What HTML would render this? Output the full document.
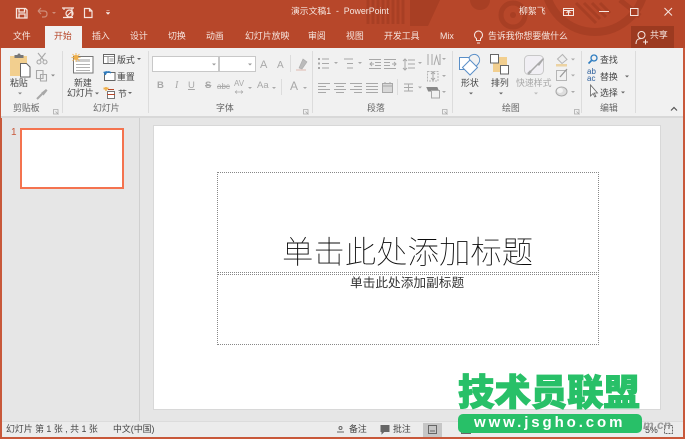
<!DOCTYPE html>
<html lang="zh"><head><meta charset="utf-8"><style>
*{box-sizing:border-box}
html,body{margin:0;padding:0}
body{width:685px;height:439px;position:relative;overflow:hidden;background:#e6e6e6;font-family:"Liberation Sans","Noto Sans CJK SC",sans-serif;color:#444}
.a,.t{position:absolute;white-space:nowrap}
.t{font-size:8.900px;line-height:12px;filter:blur(.25px)}
.w{color:#f6e6e0}
.g{color:#a8a8a8}
.l{color:#666}
.s{position:absolute;top:51px;height:62px;width:1px;background:#dcdcdc}
svg{position:absolute;left:0;top:0;filter:blur(.3px)}
</style></head><body>
<div class="a" style="left:0;top:0;width:685px;height:48px;background:#b7472a"></div>
<svg width="685" height="48" fill="none">
<g stroke="#a83f24" stroke-width="3"><path d="M368 0v24M373 0v24M378 0v24M383 0v24M388 0v24M393 0v24M398 0v24M403 0v24"/></g>
<path d="M410 0h30l-12 26h-18z" fill="#a83f24"/>
<circle cx="480" cy="0" r="10" fill="#a83f24"/>
<g stroke="#a83f24"><circle cx="513" cy="15" r="12" stroke-width="5"/><circle cx="595" cy="-18" r="50" stroke-width="8"/>
<path d="M576 3l20 20M584 3l16 16M592 3l14 14M600 3l10 10" stroke-width="3"/><path d="M620 0l20 16" stroke-width="5"/></g>
<circle cx="513" cy="15" r="3" fill="#a83f24"/>
<g stroke="#f6e6e0" stroke-width="1.200">
<path d="M16.500 8.500h9l1.500 1.500v8h-10.500zM19 8.500v3.500h5.500v-3.500M19 18v-4h6v4" stroke-width="1.300"/>
<path d="M38 11l3-3M38 11l3 3M38 11h6q3 0 3 3t-3 3h-2" stroke="#cf8d79"/>
<path d="M62 8h12M64 8v2M72 8v7M66 13.500a3.500 3.500 0 1 1 7 0a3.500 3.500 0 1 1-7 0M63 17.500h10M67 16l5-5"/>
<path d="M84.500 8.500h5l2.500 2.500v6.500h-7.500zM89.500 8.500v2.500h2.500"/>
</g>
<path d="M52 12l2 2 2-2z" fill="#cf8d79"/>
<path d="M106.500 10.500h3M106 12.500h4l-2 2z" fill="#f6e6e0" stroke="#f6e6e0" stroke-width=".5"/>
<g stroke="#f6e6e0" stroke-width="1"><rect x="563.500" y="8.500" width="10" height="7"/><path d="M563 10.500h11M568.500 11v4M566.500 13l2-2 2 2"/><path d="M599 11.500h10"/><rect x="630.500" y="8.500" width="7.500" height="7"/><path d="M664.500 8l7.500 7.500M672 8l-7.500 7.500"/></g>
</svg>
<div class="t w" style="left:291px;top:5px;font-size:8.800px">演示文稿1&nbsp; -&nbsp; PowerPoint</div>
<div class="t w" style="left:519px;top:5px">柳絮飞</div>
<div class="a" style="left:45px;top:26px;width:37px;height:22px;background:#f1f1f1"></div>
<div class="a" style="left:631px;top:26px;width:43px;height:22px;background:#9c3a20"></div>
<div class="t w" style="left:13px;top:30px">文件</div>
<div class="t" style="left:54px;top:30px;color:#b7472a">开始</div>
<div class="t w" style="left:92px;top:30px">插入</div>
<div class="t w" style="left:130px;top:30px">设计</div>
<div class="t w" style="left:168px;top:30px">切换</div>
<div class="t w" style="left:206px;top:30px">动画</div>
<div class="t w" style="left:245px;top:30px">幻灯片放映</div>
<div class="t w" style="left:308px;top:30px">审阅</div>
<div class="t w" style="left:346px;top:30px">视图</div>
<div class="t w" style="left:384px;top:30px">开发工具</div>
<div class="t w" style="left:440px;top:30px">Mix</div>
<div class="t w" style="left:488px;top:30px">告诉我你想要做什么</div>
<div class="t w" style="left:650px;top:29px">共享</div>
<svg width="685" height="48" fill="none" stroke="#f6e6e0"><path d="M476.500 38.500a4 4 0 1 1 4 0v2h-4zM477 43h3"/><circle cx="641.500" cy="35" r="3.500"/><path d="M636 44c0-5 3-5.500 5.500-5.500M643 42h5M645.500 39.500v5"/></svg>

<div class="a" style="left:1px;top:48px;width:683px;height:68px;background:#f1f1f1"></div>
<div class="a" style="left:0;top:116px;width:685px;height:2px;background:#d8d8d8"></div>
<div class="s" style="left:62px"></div><div class="s" style="left:148px"></div><div class="s" style="left:312px"></div><div class="s" style="left:452px"></div><div class="s" style="left:581px"></div><div class="s" style="left:635px"></div>

<svg width="685" height="118" fill="none">
<!-- clipboard -->
<rect x="10" y="56" width="17" height="20" fill="#f2cf8f"/><path d="M14.500 58v-3h3a1.500 1.500 0 0 1 3 0h3v3z" fill="#777"/>
<path d="M20.500 63.500h6l3.500 3.500v10h-9.500z" fill="#fff" stroke="#666"/>
<g stroke="#a8a8a8" stroke-width="1.100"><circle cx="39" cy="62" r="2"/><circle cx="45" cy="62" r="2"/><path d="M38 53l6 7.500M45.500 53l-6 7.500"/><path d="M36.500 70.500h6.500v8h-6.500zM40.500 74.500h6v6.500h-6z"/></g>
<path d="M37 99l5-5" stroke="#a8a8a8" stroke-width="2"/><path d="M41 93l5-4 1.500 1.500-4 5z" fill="#a8a8a8"/>
<path d="M18 92.500l2 2 2-2zM51 74.500l2 2 2-2z" fill="#888"/>
<!-- new slide -->
<rect x="73.500" y="56.500" width="19.500" height="16.500" fill="#fff" stroke="#777"/><rect x="76" y="59" width="14" height="3" fill="#ccc"/><path d="M76 64.500h14M76 67.500h14M76 70.500h14" stroke="#999" stroke-width=".7"/>
<circle cx="76" cy="57.500" r="2.500" fill="#f0b04a"/><path d="M71.500 57.500h9M76 53v9M72.500 54l7 7M79.500 54l-7 7" stroke="#f0b04a" stroke-width=".8"/>
<rect x="103.500" y="54.500" width="11" height="9" fill="#fff" stroke="#666"/><path d="M104 56.500h10M108 57v6M109.500 59h4M109.500 61h4" stroke="#777" stroke-width=".8"/>
<rect x="104.500" y="72.500" width="10.500" height="8" fill="#fff" stroke="#666"/><path d="M105 75a3.500 3.500 0 0 1 6-2" stroke="#2d7cc0" stroke-width="1.500"/><path d="M103 72l3 3 1-4z" fill="#2d7cc0"/>
<path d="M103.500 88.500h5" stroke="#f0b04a" stroke-width="2"/><path d="M106 87v4" stroke="#f0b04a" stroke-width="1.500"/><path d="M108 89.500h6" stroke="#b7472a"/>
<rect x="107.500" y="91.500" width="7" height="7" fill="#fff" stroke="#777"/><path d="M107 94.500h8" stroke="#b7472a"/>
<path d="M137 58l2 2 2-2zM95 92.500l2 2 2-2zM128 92l2 2 2-2z" fill="#666"/>
<!-- font -->
<rect x="152.500" y="56.500" width="66" height="15" fill="#fff" stroke="#c8c8c8"/><rect x="219.500" y="56.500" width="36" height="15" fill="#fff" stroke="#c8c8c8"/>
<path d="M212 63.500l2 2 2-2zM248 63.500l2 2 2-2z" fill="#999"/>
<path d="M290.500 55v17M281.500 79v16" stroke="#dcdcdc"/>
<path d="M299 68l4-9 4 3-5 7z" fill="#bbb" stroke="#aaa" stroke-width=".6"/><path d="M296 70h10" stroke="#e0b9b0"/>
<path d="M248 87l2 2 2-2zM272 87l2 2 2-2zM303 87l2 2 2-2z" fill="#aaa"/>
<path d="M235 92h8M235 92l2-1.500M235 92l2 1.500M243 92l-2-1.500M243 92l-2 1.500" stroke="#a8a8a8" stroke-width=".7"/>
<!-- paragraph -->
<g stroke="#a8a8a8">
<path d="M322 59h7M322 63.500h7M322 68h7M344 59h9M347 63.500h6M347 68h6"/>
<path d="M318 58v2h2v-2zM318 62.500v2h2v-2zM318 67v2h2v-2z" fill="#a8a8a8" stroke="none"/>
<path d="M369 59.500h12M369 68.500h12M375 62.500h6M375 65.500h6M374 64h-4M372 62l-2 2 2 2"/>
<path d="M384 59.500h12M384 68.500h12M384 62.500h6M384 65.500h6M392 64h4M394 62l2 2-2 2"/>
<path d="M408 60h7M408 64h7M408 68h7M405 59v11M403 61l2-2 2 2M403 68l2 2 2-2"/>
<path d="M428 54v11M432 54v11M440 54v11M434 65l2.500-9 2.500 9" stroke-width="1"/>
<rect x="427.500" y="71.500" width="10.500" height="9.500" stroke="#b5b5b5" stroke-dasharray="2 1"/><path d="M433 72v8M431 74l2-2 2 2M431 78l2 2 2-2"/>
<path d="M427 87.500h10l1.500 3.500h-10z" fill="#888" stroke="#888"/><rect x="431.500" y="90.500" width="8" height="7.500" fill="#f1f1f1"/>
<path d="M318 83.500h12M318 86.500h8M318 89.500h12M318 92.500h8"/>
<path d="M334 83.500h12M336 86.500h8M334 89.500h12M336 92.500h8"/>
<path d="M350 83.500h12M354 86.500h8M350 89.500h12M354 92.500h8"/>
<path d="M366 83.500h12M366 86.500h12M366 89.500h12M366 92.500h12"/>
<rect x="382.500" y="83.500" width="10" height="9" fill="#d8d8d8"/><path d="M382 86h11M385 82v2M390 82v2"/>
<path d="M404 84h9M404 87.500h9M404 91h9M408.500 84v7" stroke-width=".9"/>
<path d="M397.500 79v16" stroke="#dcdcdc"/>
</g>
<path d="M334 62l2 2 2-2zM358 62l2 2 2-2zM418 62l2 2 2-2zM442 58l2 2 2-2zM442 75l2 2 2-2zM442 91l2 2 2-2zM418 86.500l2 2 2-2z" fill="#aaa"/>
<!-- shapes -->
<path d="M459.500 57.500h12.500v12h-12.500z" fill="#fff" stroke="#5a8fc8"/>
<path d="M469 58a5.500 5.500 0 0 1 9.500-1.500a6 6 0 0 1 0 7l-5 6z" fill="#f1f1f1" stroke="#5a8fc8"/>
<path d="M470 60l7.500 7.500-7.500 7.500-7.500-7.500z" fill="#fff" stroke="#5a8fc8"/>
<rect x="493" y="57" width="14" height="15" fill="#f2cf8f"/>
<rect x="490.500" y="54.500" width="8" height="8.500" fill="#fff" stroke="#666"/>
<rect x="500.500" y="65.500" width="8" height="8.500" fill="#fff" stroke="#666"/>
<rect x="524.500" y="55.500" width="19" height="19" rx="4" fill="#f1eff4" stroke="#c8c8c8"/>
<path d="M531 71l7-7" stroke="#a8a8a8" stroke-width="1.500"/><path d="M537 64l6-6 1 1-5 7z" fill="#a8a8a8"/>
<path d="M528 74l3-3" stroke="#a8a8a8" stroke-width="2.500"/>
<path d="M557.500 59l5-4.500 4.500 5-5 4z" fill="#eee" stroke="#b5b5b5"/><rect x="556" y="64" width="11" height="2.500" fill="#ecd3a3"/>
<rect x="556.500" y="70.500" width="10" height="10" fill="#f1f1f1" stroke="#b5b5b5"/><path d="M560 77l7-8" stroke="#999" stroke-width="1.300"/>
<ellipse cx="561.500" cy="91.500" rx="5.500" ry="4.500" fill="#ddd" stroke="#a8a8a8"/><ellipse cx="560" cy="90.500" rx="3" ry="2.500" fill="#f4f4f4"/>
<path d="M571 58.500l2 2 2-2zM571 74.500l2 2 2-2zM571 91l2 2 2-2z" fill="#aaa"/>
<path d="M469 92.500l2 2 2-2zM499 92.500l2 2 2-2z" fill="#666"/><path d="M534 92.500l2 2 2-2z" fill="#bbb"/>
<!-- editing -->
<circle cx="594" cy="58" r="3" stroke="#2d7cc0" stroke-width="1.300"/><path d="M591.500 60.500l-3 3" stroke="#2d7cc0" stroke-width="1.600"/>
<path d="M590.500 85v11l2.500-2.500 1.800 3.500 1.200-.6-1.800-3.400h3.300z" fill="#f8f8f8" stroke="#666" stroke-width=".8"/>
<path d="M625 75.500l2 2 2-2zM621 91.500l2 2 2-2z" fill="#666"/>
<path d="M671 110.500l3-3 3 3" stroke="#555" stroke-width="1.200"/>
<g stroke="#aaa" stroke-width=".8"><path d="M53.500 109.500h4.500v4.500h-4.500zM55.500 111.500l3 3M303.500 109.500h4.500v4.500h-4.500zM305.500 111.500l3 3M442.500 109.500h4.500v4.500h-4.500zM444.500 111.500l3 3M574.500 109.500h4.500v4.500h-4.500zM576.500 111.500l3 3"/></g>
</svg>
<div class="t" style="left:10px;top:77px">粘贴</div>
<div class="t" style="left:74px;top:77px">新建</div>
<div class="t" style="left:67px;top:87px">幻灯片</div>
<div class="t" style="left:117px;top:54px">版式</div>
<div class="t" style="left:117px;top:71px">重置</div>
<div class="t" style="left:118px;top:88px">节</div>
<div class="t l" style="left:13px;top:102px">剪贴板</div>
<div class="t l" style="left:93px;top:102px">幻灯片</div>
<div class="t l" style="left:216px;top:102px">字体</div>
<div class="t l" style="left:367px;top:102px">段落</div>
<div class="t l" style="left:502px;top:102px">绘图</div>
<div class="t l" style="left:600px;top:102px">编辑</div>
<div class="t g" style="left:260px;top:59px;font-size:11px">A</div>
<div class="t g" style="left:277px;top:60px;font-size:10px">A</div>
<div class="t g" style="left:157px;top:80px;font-size:9.500px;font-weight:bold">B</div>
<div class="t g" style="left:175px;top:80px;font-size:10px;font-style:italic;font-family:'Liberation Serif',serif">I</div>
<div class="t g" style="left:188px;top:80px;font-size:9.500px;text-decoration:underline">U</div>
<div class="t g" style="left:205px;top:80px;font-size:9.500px;font-weight:bold;text-decoration:line-through">S</div>
<div class="t g" style="left:217px;top:81px;font-size:8px;text-decoration:line-through">abc</div>
<div class="t g" style="left:234px;top:78px;font-size:8px">AV</div>
<div class="t g" style="left:257px;top:80px;font-size:9.500px">Aa</div>
<div class="t g" style="left:290px;top:80px;font-size:12px">A</div>
<div class="t" style="left:461px;top:77px">形状</div>
<div class="t" style="left:491px;top:77px">排列</div>
<div class="t g" style="left:516px;top:77px">快速样式</div>
<div class="t" style="left:600px;top:54px">查找</div>
<div class="t" style="left:600px;top:71px">替换</div>
<div class="t" style="left:600px;top:87px">选择</div>
<div class="t" style="left:587px;top:68px;font-size:8px;line-height:7px;color:#2d5f9c">ab<br>ac</div>

<div class="a" style="left:139px;top:118px;width:1px;height:303px;background:#d0d0d0"></div>
<div class="t" style="left:11px;top:127px;font-size:10px;color:#c8583a">1</div>
<div class="a" style="left:20px;top:128px;width:104px;height:61px;background:#fff;border:2px solid #f4734f"></div>
<div class="a" style="left:153px;top:125px;width:508px;height:285px;background:#fff;border:1px solid #d8d8d8"></div>
<div class="a" style="left:217px;top:172px;width:382px;height:101px;border:1px dotted #888"></div>
<div class="a" style="left:217px;top:274px;width:382px;height:71px;border:1px dotted #888"></div>
<div class="t" style="left:282px;top:233px;font-size:31.400px;line-height:36px;font-weight:100;color:#0c0c0c;filter:none;font-family:'Noto Sans CJK SC',sans-serif">单击此处添加标题</div>
<div class="t" style="left:350px;top:276px;font-size:12.700px;line-height:15px;color:#333;filter:none">单击此处添加副标题</div>

<div class="a" style="left:0;top:421px;width:685px;height:16px;background:#ececec;border-top:1px solid #dcdcdc"></div>
<div class="a" style="left:0;top:437px;width:685px;height:2px;background:#c8583a"></div>
<div class="a" style="left:0;top:118px;width:2px;height:321px;background:#c8583a"></div>
<div class="a" style="left:683px;top:48px;width:2px;height:391px;background:#c8583a"></div>
<div class="a" style="left:0;top:48px;width:1px;height:70px;background:#c8583a"></div>
<div class="t" style="left:6px;top:423px">幻灯片 第 1 张 , 共 1 张</div>
<div class="t" style="left:113px;top:423px">中文(中国)</div>
<div class="t" style="left:349px;top:423px">备注</div>
<div class="t" style="left:393px;top:423px">批注</div>
<div class="a" style="left:423px;top:423px;width:19px;height:14px;background:#c6c6c6"></div>
<svg width="685" height="439" fill="none" stroke="#666"><path d="M337 432h7M339 428a1.500 1.500 0 1 1 3 0a1.500 1.500 0 1 1-3 0"/><path d="M381 425.500h8v6h-5l-2 2v-2h-1z" fill="#666"/><rect x="428.500" y="425.500" width="8" height="8"/><path d="M430 431h5"/><rect x="461.500" y="425.500" width="9" height="8"/><path d="M466 426v7M462 429h8"/><rect x="664.500" y="425.500" width="8" height="8" stroke-dasharray="2 1"/></svg>
<div class="t" style="left:645px;top:424px">5%</div>

<div class="t" style="left:458px;top:366px;font-size:36.400px;line-height:48px;font-weight:900;color:#28c068;filter:none;font-family:'Noto Sans CJK SC',sans-serif;-webkit-text-stroke:1px #28c068">技术员联盟</div>
<div class="a" style="left:458px;top:414px;width:184px;height:19px;background:#28c068;border-radius:5px"></div>
<div class="a" style="left:474px;top:414px;font:bold 15px/18px 'Liberation Sans',sans-serif;letter-spacing:2.900px;color:#fff;white-space:nowrap">www.jsgho.com</div>
<div class="t" style="left:643px;top:419px;font-size:12px;font-style:italic;font-weight:bold;color:#999">m.cn</div>
</body></html>
